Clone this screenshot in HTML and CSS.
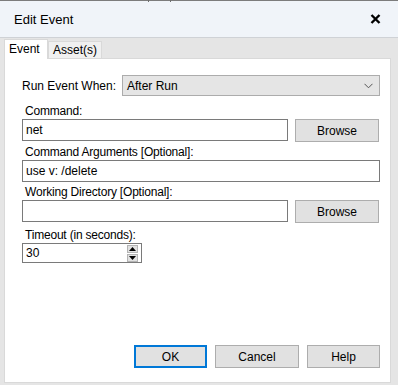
FILE: index.html
```html
<!DOCTYPE html>
<html lang="en">
<head>
    <meta charset="UTF-8">
    <title>Edit Event</title>
    <link rel="stylesheet" href="styles.css">
</head>
<body>
    <div class="window">
        <div class="top-edge"></div>
        <header class="titlebar">
            <span class="title">Edit Event</span>
            <svg class="close" width="11" height="10" viewBox="0 0 11 10">
                <path d="M1.5 1 L9.5 9 M9.5 1 L1.5 9" stroke="#000" stroke-width="2.4"/>
            </svg>
        </header>

        <nav class="tabs">
            <div class="tab active">Event</div>
            <div class="tab">Asset(s)</div>
        </nav>

        <section class="panel">
            <div class="run-row">
                <span class="run-label">Run Event When:</span>
                <div class="select">
                    <span>After Run</span>
                    <svg width="9" height="6" viewBox="0 0 9 6">
                        <path d="M0.5 0.8 L4.5 4.8 L8.5 0.8" fill="none" stroke="#555" stroke-width="1"/>
                    </svg>
                </div>
            </div>

            <div class="field first">
                <label>Command:</label>
                <div class="input-row">
                    <div class="input short">net</div>
                    <button class="btn browse">Browse</button>
                </div>
            </div>

            <div class="field">
                <label>Command Arguments [Optional]:</label>
                <div class="input">use v: /delete</div>
            </div>

            <div class="field">
                <label>Working Directory [Optional]:</label>
                <div class="input-row">
                    <div class="input short"></div>
                    <button class="btn browse">Browse</button>
                </div>
            </div>

            <div class="field timeout">
                <label>Timeout (in seconds):</label>
                <div class="input spinner">
                    <span>30</span>
                    <div class="spin">
                        <div class="spin-btn">
                            <svg width="7" height="4" viewBox="0 0 7 4"><path d="M0 4 L3.5 0 L7 4 Z" fill="#000"/></svg>
                        </div>
                        <div class="spin-btn">
                            <svg width="7" height="4" viewBox="0 0 7 4"><path d="M0 0 L3.5 4 L7 0 Z" fill="#000"/></svg>
                        </div>
                    </div>
                </div>
            </div>

            <footer class="actions">
                <button class="btn ok">OK</button>
                <button class="btn cancel">Cancel</button>
                <button class="btn help">Help</button>
            </footer>
        </section>
    </div>
</body>
</html>
```

FILE: styles.css
```css
* {
    margin: 0;
    padding: 0;
    box-sizing: border-box;
}

body {
    font-family: "Liberation Sans", Arial, sans-serif;
    font-size: 12px;
    color: #000;
    background-color: #e5e5e5;
    width: 398px;
    height: 385px;
    overflow: hidden;
}

.window {
    height: 385px;
    display: flex;
    flex-direction: column;
}

.top-edge {
    height: 2px;
    background:
        linear-gradient(#6e6e6e, #6e6e6e) 148px 0 / 1px 2px no-repeat,
        linear-gradient(#6e6e6e, #6e6e6e) 170px 0 / 1px 2px no-repeat,
        linear-gradient(#7c7c7c 1px, #f0f4f9 1px);
}

.titlebar {
    height: 36px;
    background-color: #f0f4f9;
    border-bottom: 1px solid #cfd2d6;
    display: flex;
    align-items: center;
    justify-content: space-between;
    padding: 0 17px 1px 14px;
}

.title {
    font-size: 13px;
}

/* tabs */
.tabs {
    display: flex;
    align-items: flex-end;
    height: 19px;
    margin-top: 1px;
    padding-left: 4px;
    position: relative;
    z-index: 1;
}

.tab {
    height: 17px;
    padding: 0 4px;
    line-height: 16px;
    background-color: #f0f0f0;
    border: 1px solid #d9d9d9;
    border-bottom: none;
}

.tab.active {
    height: 20px;
    width: 44px;
    background-color: #fff;
    padding: 1px 0 0 4px;
    margin-bottom: -1px;
}

.panel {
    flex: 1;
    margin: 0 7px 2px 4px;
    background-color: #fff;
    border: 1px solid #d9d9d9;
    padding: 16px 10px 14px 17px;
    display: flex;
    flex-direction: column;
}

.run-row {
    display: flex;
    align-items: center;
    height: 21px;
}

.run-label {
    width: 100px;
}

.select {
    flex: 1;
    height: 21px;
    background-color: #e5e5e5;
    border: 1px solid #acacac;
    display: flex;
    align-items: center;
    justify-content: space-between;
    padding: 0 6px 0 4px;
}

.field {
    margin-top: 2px;
}

.field.first {
    margin-top: 7px;
}

.field.timeout {
    margin-top: 4px;
}

.field label {
    display: block;
    height: 16px;
    line-height: 16px;
    padding-left: 3px;
    letter-spacing: -0.2px;
}

.input-row {
    display: flex;
    gap: 7px;
}

.input {
    height: 22px;
    border: 1px solid #7a7a7a;
    background-color: #fff;
    line-height: 20px;
    padding-left: 3px;
}

.input.short {
    width: 266px;
}

.btn {
    font-family: inherit;
    font-size: 12px;
    color: #000;
    background-color: #e1e1e1;
    border: 1px solid #adadad;
    height: 23px;
}

.browse {
    width: 84px;
}

.spinner {
    width: 120px;
    height: 20px;
    display: flex;
    justify-content: space-between;
    line-height: 18px;
    padding-right: 3px;
}

.spin {
    display: flex;
    flex-direction: column;
    padding-top: 1px;
}

.spin-btn {
    width: 11px;
    height: 8px;
    background-color: #e1e1e1;
    border: 1px solid #b4b4b4;
    display: flex;
    align-items: center;
    justify-content: center;
}

.spin-btn + .spin-btn {
    margin-top: 1px;
}

.actions {
    margin-top: auto;
    display: flex;
    justify-content: flex-end;
    gap: 8px;
}

.ok {
    width: 73px;
    border: 2px solid #0078d7;
}

.cancel {
    width: 84px;
}

.help {
    width: 73px;
}
```
